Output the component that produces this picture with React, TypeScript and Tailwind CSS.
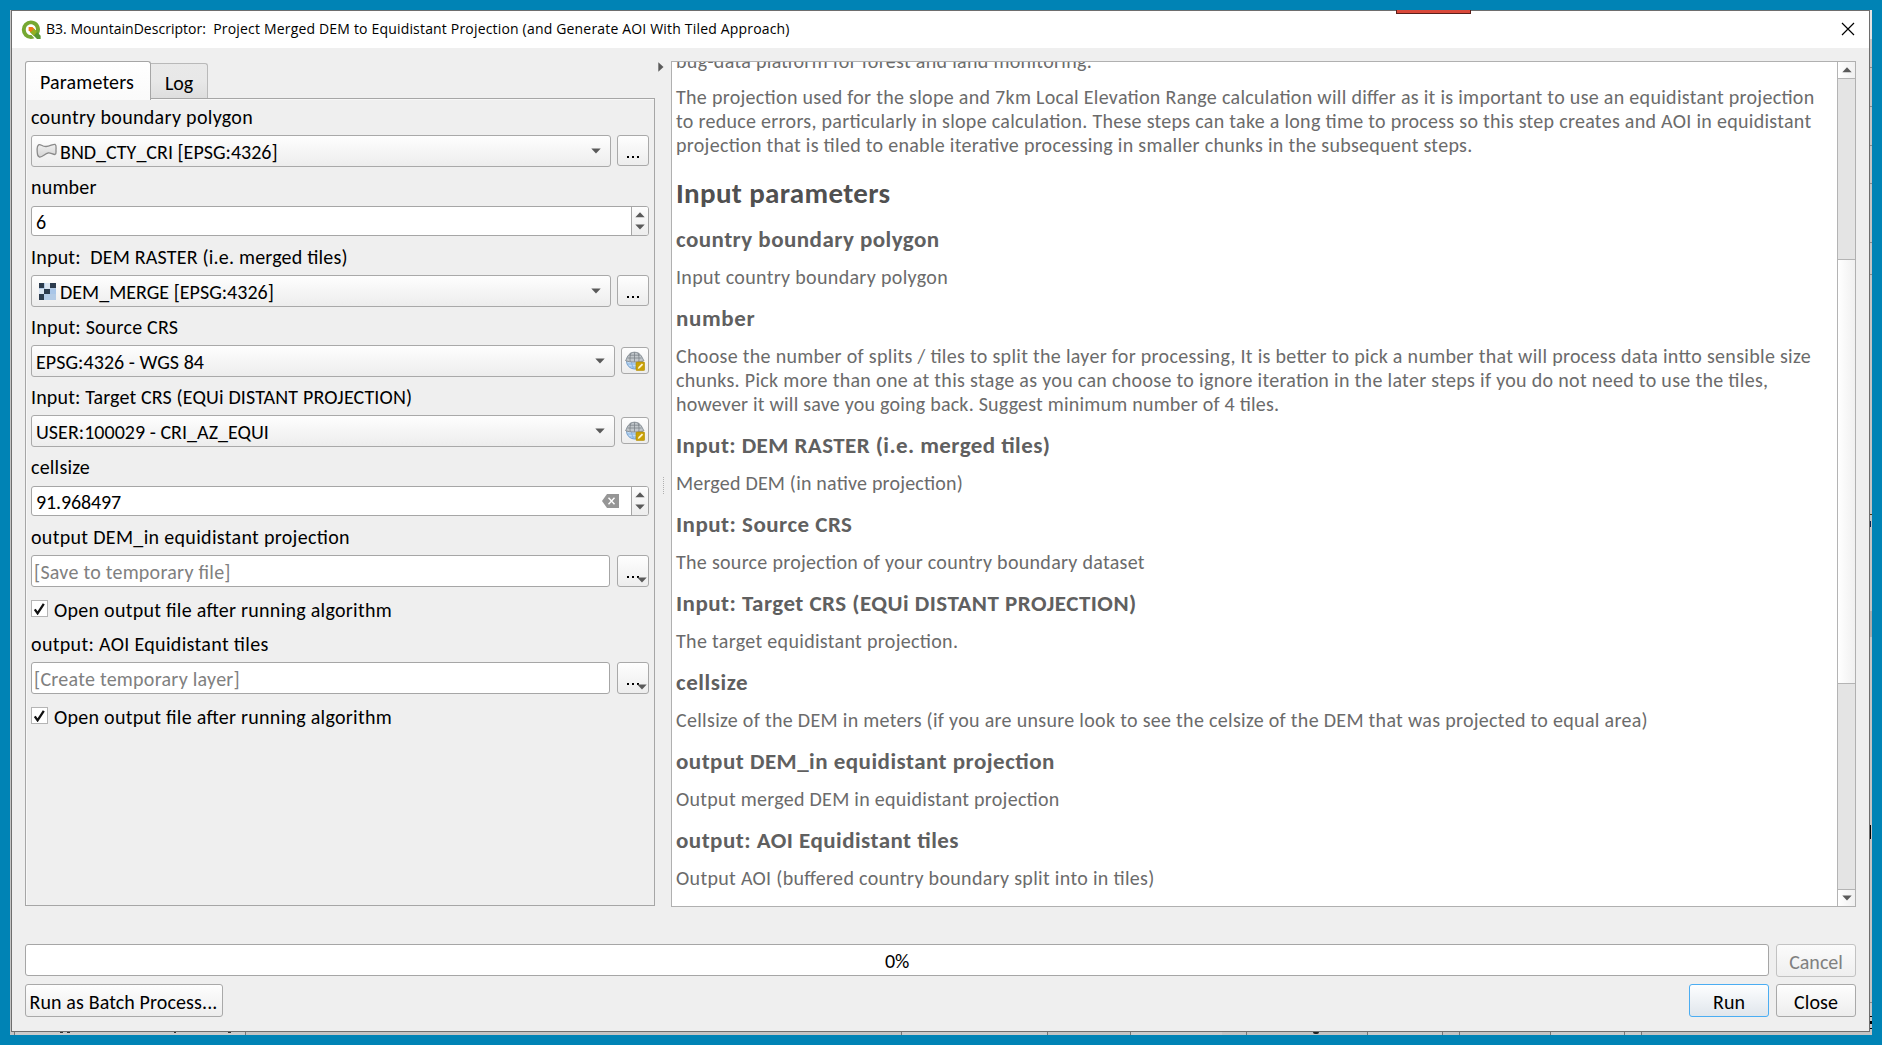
import type { ReactNode } from "react";

function Arrow({ up = false, className = "" }: { up?: boolean; className?: string }) {
  return (
    <svg width="10" height="6" viewBox="0 0 10 6" className={`block shrink-0 ${className}`}>
      <path d={up ? "M0.3 5.3 L5 0.3 L9.7 5.3Z" : "M0.3 0.5 L9.7 0.5 L5 5.5Z"} fill="#5a5a5a" />
    </svg>
  );
}

function QgisLogo() {
  return (
    <svg width="20" height="20" viewBox="0 0 20 20" className="block">
      <path
        fillRule="evenodd"
        d="M9.8 0.5a9 9.2 0 1 0 0 18.4c1.3 0 2.5-.2 3.6-.7l-3-3.1c-3.3.2-5.6-2.3-5.6-5.4 0-3.2 2.2-5.5 5.1-5.5s5.100 2.300 5.100 5.400c0 .8-.1 1.400-.4 2l2.900 3a9.200 9.200 0 0 0 1.500-5C19 4.300 15.200.500 9.800.500Z"
        fill="#76a832"
      />
      <path d="M9.500 8.800h3.600l6.500 7v3.200h-3.600l-6.500-6.600Z" fill="#589632" />
      <path d="M9.500 8.800h3.600l3 3.300-3.300 3.600-3.300-3.300Z" fill="#93b023" />
      <path d="M7.600 7h3.900l1.600 1.800-3.600 3.500-1.900-2Z" fill="#ee7913" />
    </svg>
  );
}

function PolygonIcon() {
  return (
    <svg width="22" height="16" viewBox="0 0 22 16" className="block shrink-0">
      <defs>
        <linearGradient id="poly" x1="0" y1="0" x2="0" y2="1">
          <stop offset="0" stopColor="#f0f0f0" />
          <stop offset="1" stopColor="#d4d4d4" />
        </linearGradient>
      </defs>
      <path
        d="M3 1.600C5 1 6 3.600 10 3.500C14 3.400 16.500 1 19 1.300C20.800 2.500 20 5 20 7C20 9.500 20.500 11 19 11.500C16.500 11.500 14.500 9.500 12 10C9 10.500 6.500 14.500 3.500 14C1 13.500 1.500 11 1.200 8.500C1 6 1 2.600 3 1.600Z"
        fill="url(#poly)"
        stroke="#8a8a8a"
        strokeWidth="1.300"
      />
    </svg>
  );
}

function RasterIcon() {
  return (
    <svg width="17" height="17" viewBox="0 0 17 17" className="block shrink-0" shapeRendering="crispEdges">
      <rect width="17" height="17" fill="#b3cbe6" />
      <rect x="6" width="5" height="6" fill="#dbe6f2" />
      <rect y="6" width="6" height="5" fill="#dbe6f2" />
      <rect width="5" height="5" fill="#2b3b4d" />
      <rect x="11" width="6" height="5" fill="#2b3b4d" />
      <rect x="5" y="6" width="6" height="5" fill="#2b3b4d" />
      <rect y="11" width="5" height="6" fill="#2b3b4d" />
      <rect x="11" y="6" width="6" height="5" fill="#a9c6e8" />
    </svg>
  );
}

function GlobeIcon() {
  return (
    <svg width="20" height="20" viewBox="0 0 20 20" className="block">
      <circle cx="9.500" cy="10" r="8" fill="#c3dcf5" stroke="#6f9ccb" strokeWidth="1" />
      <path d="M3 13h12M5 16h8M6.500 10c0 4 1.500 7 3 8M12.500 10c0 4-1.500 7-3 8" fill="none" stroke="#7fadde" strokeWidth="0.900" />
      <path d="M0.500 9.500C2 8.500 2.500 1.200 9.500 1.200S17.500 8.500 19 9.500C16 11.500 3.500 11.500 0.500 9.500Z" fill="#c2c7cb" stroke="#8a9197" strokeWidth="1" />
      <path d="M2.600 7h14M4.200 4.200h10.800M9.500 1.200v9.600M6 1.800C5 4.500 4.800 7.500 5.200 10.500M13 1.800c1 2.700 1.200 5.700.8 8.700" fill="none" stroke="#7c8389" strokeWidth="0.800" />
      <rect x="11" y="11" width="8.600" height="8.600" rx="1" fill="#c9a107" stroke="#b08c00" strokeWidth="0.600" />
      <path d="M12.800 17.900l.6-2 3.500-3.400 1.300 1.300-3.500 3.500Z" fill="#fff6cf" />
    </svg>
  );
}

const edge = "border border-[#a6a6a6] rounded-[3px]";
const raised = "border border-[#a9a9a9] rounded-[3px] bg-linear-to-b from-[#fefefe] to-[#ededed]";

function Group({ label, tracking, children }: { label: string; tracking: string; children: ReactNode }) {
  return (
    <div className="h-[70px] shrink-0">
      <div className={`flex h-[35px] items-center pb-px whitespace-pre ${tracking}`}>{label}</div>
      {children}
    </div>
  );
}

function Combo({ text, tracking, icon, width }: { text: string; tracking: string; icon?: ReactNode; width: string }) {
  return (
    <div className={`flex h-8 items-center ${width} ${raised}`}>
      {icon}
      <span className={`grow pt-px whitespace-pre ${icon ? "pl-[2px]" : "pl-1"} ${tracking}`}>{text}</span>
      <Arrow className="mr-[9px]" />
    </div>
  );
}

function Dots({ menu = false }: { menu?: boolean }) {
  return (
    <button className={`relative flex w-8 items-end justify-center ${menu ? "h-8 pb-[8px]" : "h-[31px] pb-[7px]"} ${raised}`}>
      <span className="flex gap-[3px]">
        <i className="h-0.5 w-0.5 bg-black" />
        <i className="h-0.5 w-0.5 bg-black" />
        <i className="h-0.5 w-0.5 bg-black" />
      </span>
      {menu && <Arrow className="absolute right-px bottom-[3px]" />}
    </button>
  );
}

function Spin({ value, tracking, clear = false }: { value: string; tracking: string; clear?: boolean }) {
  return (
    <div className={`mt-px flex h-[30px] items-center bg-white ${edge}`}>
      <span className={`grow pt-px pl-1 ${tracking}`}>{value}</span>
      {clear && (
        <svg width="17" height="14" viewBox="0 0 17 14" className="mr-3 block">
          <path d="M5 0H17V14H5L0 7Z" fill="#969696" />
          <path d="M6.500 3.800l6 6.400M12.500 3.800l-6 6.400" stroke="#fff" strokeWidth="1.400" />
        </svg>
      )}
      <div className="flex h-full w-[17px] flex-col items-center justify-center gap-1.5 rounded-r-[2px] border-l border-[#a6a6a6] bg-linear-to-b from-[#fdfdfd] to-[#ededed]">
        <Arrow up />
        <Arrow />
      </div>
    </div>
  );
}

function Crs({ text, tracking }: { text: string; tracking: string }) {
  return (
    <div className="flex items-start gap-1.5">
      <Combo width="w-[584px]" text={text} tracking={tracking} />
      <button className={`mt-0.5 flex h-[27px] w-7 items-center justify-center ${raised}`}>
        <GlobeIcon />
      </button>
    </div>
  );
}

function Output({ label, placeholder, tracking, phTracking }: { label: string; placeholder: string; tracking: string; phTracking: string }) {
  return (
    <div className="h-[107px] shrink-0">
      <div className={`flex h-[35px] items-center pb-px ${tracking}`}>{label}</div>
      <div className="flex gap-[7px]">
        <div className={`flex h-8 w-[579px] items-center bg-white pt-px pl-[2px] text-[#808080] ${edge} ${phTracking}`}>{placeholder}</div>
        <Dots menu />
      </div>
      <div className="mt-[13px] flex h-[17px] items-center">
        <span className="flex h-[17px] w-[17px] items-center justify-center border border-[#b4b4b4] bg-white">
          <svg width="13" height="13" viewBox="0 0 13 13" className="block">
            <path d="M1.800 7.300L4.600 11.300L10.800 1.800" fill="none" stroke="#111" strokeWidth="2.300" />
          </svg>
        </span>
        <span className="pt-0.5 pl-1.5 tracking-[0.271px]">Open output file after running algorithm</span>
      </div>
    </div>
  );
}

function P({ lines }: { lines: [string, string][] }) {
  return (
    <p className="mb-2 text-[#6b6b6b]">
      {lines.map(([text, tracking]) => (
        <span key={text} className={`block h-6 leading-6 whitespace-pre ${tracking}`}>
          {text}
        </span>
      ))}
    </p>
  );
}

const help: { title: string; titleTracking: string; lines: [string, string][] }[] = [
  { title: "country boundary polygon", titleTracking: "tracking-[0.46px]", lines: [["Input country boundary polygon", "tracking-[0.32px]"]] },
  {
    title: "number",
    titleTracking: "tracking-[0.65px]",
    lines: [
      ["Choose the number of splits / tiles to split the layer for processing, It is better to pick a number that will process data intto sensible size", "tracking-[0.308px]"],
      ["chunks. Pick more than one at this stage as you can choose to ignore iteration in the later steps if you do not need to use the tiles,", "tracking-[0.314px]"],
      ["however it will save you going back. Suggest minimum number of 4 tiles.", "tracking-[0.222px]"],
    ],
  },
  { title: "Input: DEM RASTER (i.e. merged tiles)", titleTracking: "tracking-[0.43px]", lines: [["Merged DEM (in native projection)", "tracking-[0.2px]"]] },
  { title: "Input: Source CRS", titleTracking: "tracking-[0.48px]", lines: [["The source projection of your country boundary dataset", "tracking-[0.29px]"]] },
  { title: "Input: Target CRS (EQUi DISTANT PROJECTION)", titleTracking: "tracking-[0.47px]", lines: [["The target equidistant projection.", "tracking-[0.32px]"]] },
  {
    title: "cellsize",
    titleTracking: "tracking-[0.55px]",
    lines: [["Cellsize of the DEM in meters (if you are unsure look to see the celsize of the DEM that was projected to equal area)", "tracking-[0.303px]"]],
  },
  { title: "output DEM_in equidistant projection", titleTracking: "tracking-[0.48px]", lines: [["Output merged DEM in equidistant projection", "tracking-[0.283px]"]] },
  { title: "output: AOI Equidistant tiles", titleTracking: "tracking-[0.47px]", lines: [["Output AOI (buffered country boundary split into in tiles)", "tracking-[0.316px]"]] },
];

function ScrollBar() {
  return (
    <div className="flex w-[18px] shrink-0 flex-col border-l border-[#b4b4b4] bg-[#e4e4e4]">
      <div className="flex h-[16px] shrink-0 items-center justify-center bg-linear-to-r from-white to-[#f0f0f0]">
        <Arrow up />
      </div>
      <div className="h-[181px] shrink-0 border-t border-[#b4b4b4]" />
      <div className="h-[425px] shrink-0 border-y border-[#b4b4b4] bg-linear-to-r from-white to-[#f0f0f0]" />
      <div className="grow" />
      <div className="flex h-[17px] shrink-0 items-center justify-center border-t border-[#b4b4b4] bg-linear-to-r from-white to-[#f0f0f0]">
        <Arrow />
      </div>
    </div>
  );
}

export default function App() {
  return (
    <div className="h-[1045px] w-[1882px] overflow-hidden bg-[#0083b5] p-[10px] font-[Carlito,Lato,'Open_Sans',sans-serif] text-[20px] leading-6 text-black [font-feature-settings:'liga'_1,'clig'_1]">
      <div className="relative h-[1025px] w-[1862px] bg-[#c4c4c4] pl-px">
        {/* Slivers of the window behind the dialog */}
        <div className="absolute top-0 right-0 h-[29px] w-0.5 bg-[#e4e4e4]" />
        <div className="absolute top-[57px] right-0 h-px w-0.5 bg-[#888]" />
        <div className="absolute top-[96px] right-0 h-px w-0.5 bg-[#888]" />
        <div className="absolute top-[135px] right-0 h-px w-0.5 bg-[#888]" />
        <div className="absolute top-[173px] right-0 h-px w-0.5 bg-[#888]" />
        <div className="absolute top-[232px] right-0 h-px w-0.5 bg-[#888]" />
        <div className="absolute top-[264px] right-0 h-px w-0.5 bg-[#888]" />
        <div className="absolute top-[504px] right-0 h-px w-0.5 bg-[#4a3510]" />
        <div className="absolute top-[511px] right-px h-[6px] w-px bg-[#0d2450]" />
        <div className="absolute top-[601px] right-0 h-[26px] w-0.5 bg-[#aaa]" />
        <div className="absolute top-[815px] right-px h-[14px] w-px bg-black" />
        <div className="absolute top-[992px] right-0 h-px w-0.5 bg-[#888]" />
        <div className="absolute top-[1006px] right-0 h-px w-[3px] bg-black" />
        <div className="absolute top-[1011px] right-0 h-[3px] w-[3px] bg-black" />
        <div className="absolute top-[1018px] right-0 h-px w-[3px] bg-black" />
        <div className="absolute top-[1022px] left-[4px] h-[3px] w-[232px] border-x border-[#777] bg-[#ccc]" />
        <div className="absolute top-[1022px] left-[50px] h-px w-[3px] bg-[#333]" />
        <div className="absolute top-[1022px] left-[57px] h-px w-[3px] bg-[#333]" />
        <div className="absolute top-[1022px] left-[164px] h-px w-[2px] bg-[#333]" />
        <div className="absolute top-[1022px] left-[218px] h-px w-[3px] bg-[#333]" />
        <div className="absolute top-[1022px] left-[891px] h-[3px] w-[147px] border-x border-[#777] bg-[#ccc]" />
        <div className="absolute top-[1022px] left-[1120px] h-[3px] w-[92px] border-l border-[#777] bg-[#ccc]" />
        <div className="absolute top-[1022px] left-[1236px] h-[3px] w-px bg-[#777]" />
        <div className="absolute top-[1022px] left-[1303px] h-0.5 w-[6px] rounded-b bg-[#222]" />
        <div className="absolute top-[1022px] left-[1357px] h-[3px] w-[76px] border-x border-[#777] bg-[#ccc]" />
        <div className="absolute top-[1022px] left-[1449px] h-[3px] w-px bg-[#777]" />
        <div className="absolute top-[1022px] left-[1540px] h-[3px] w-[75px] border-l border-[#777] bg-[#ccc]" />
        <div className="absolute top-[1022px] left-[1614px] h-[3px] w-[18px] border-x border-[#777] bg-[#ccc]" />

        <div className="relative flex h-[1022px] w-[1859px] flex-col border border-[#6e6e6e] bg-[#efefef]">
          <div className="absolute -top-px left-[1384px] h-1 w-[75px] border border-t-0 border-[#5c1f1a] bg-[#d9493a]" />
          <header className="flex h-[37px] shrink-0 items-center bg-white pl-[9px]">
            <QgisLogo />
            <h1 className="pb-px pl-[5px] font-['Open_Sans',sans-serif] text-[14px] whitespace-pre">
              <span className="tracking-[0.02px]">{"B3. MountainDescriptor:  "}</span>
              <span className="tracking-[0.177px]">Project Merged DEM to Equidistant Projection (and Generate AOI With Tiled Approach)</span>
            </h1>
            <svg width="14" height="14" viewBox="0 0 14 14" className="mr-[14px] mb-px ml-auto block">
              <path d="M1 1L13 13M13 1L1 13" stroke="#000" strokeWidth="1.200" />
            </svg>
          </header>

          <div className="flex h-[859px] shrink-0 items-start pt-[13px] pl-[13px]">
            <div className="flex w-[630px] shrink-0 flex-col">
              <div className="relative z-10 flex h-[37px] items-end">
                <div className="-mb-px flex h-[39px] w-[126px] items-center justify-center self-start rounded-t-[3px] border border-b-0 border-[#a6a6a6] bg-linear-to-b from-white to-[#fafafa] pt-px pr-0.5 tracking-[0.166px]">
                  Parameters
                </div>
                <div className="flex h-[35px] w-[57px] items-center justify-center rounded-tr-[3px] border border-b-0 border-l-0 border-[#b9b9b9] bg-linear-to-b from-[#e9e9e9] via-[#e8e8e8] to-[#dedede] pt-1 tracking-[-0.2px]">
                  Log
                </div>
              </div>
              <div className="flex h-[808px] flex-col border border-[#a6a6a6] pt-px pr-[5px] pl-[5px] shadow-[inset_1px_1px_0_#f8f8f8]">
                <Group label="country boundary polygon" tracking="tracking-[0.31px]">
                  <div className="flex gap-1.5">
                    <Combo
                      width="w-[580px]"
                      text="BND_CTY_CRI [EPSG:4326]"
                      tracking="tracking-[0.01px]"
                      icon={<span className="pl-1"><PolygonIcon /></span>}
                    />
                    <Dots />
                  </div>
                </Group>
                <Group label="number" tracking="tracking-[0.2px]">
                  <Spin value="6" tracking="tracking-normal" />
                </Group>
                <Group label="Input:  DEM RASTER (i.e. merged tiles)" tracking="tracking-[0.2px]">
                  <div className="flex gap-1.5">
                    <Combo
                      width="w-[580px]"
                      text="DEM_MERGE [EPSG:4326]"
                      tracking="tracking-[0.01px]"
                      icon={<span className="pr-[2px] pl-[7px]"><RasterIcon /></span>}
                    />
                    <Dots />
                  </div>
                </Group>
                <Group label="Input: Source CRS" tracking="tracking-[0.22px]">
                  <Crs text="EPSG:4326 - WGS 84" tracking="tracking-[0.05px]" />
                </Group>
                <Group label="Input: Target CRS (EQUi DISTANT PROJECTION)" tracking="tracking-[0.15px]">
                  <Crs text="USER:100029 - CRI_AZ_EQUI" tracking="tracking-[0.03px]" />
                </Group>
                <Group label="cellsize" tracking="tracking-[0.2px]">
                  <Spin value="91.968497" tracking="tracking-[-0.12px]" clear />
                </Group>
                <Output
                  label="output DEM_in equidistant projection"
                  tracking="tracking-[0.32px]"
                  placeholder="[Save to temporary file]"
                  phTracking="tracking-[0.25px]"
                />
                <Output
                  label="output: AOI Equidistant tiles"
                  tracking="tracking-[0.33px]"
                  placeholder="[Create temporary layer]"
                  phTracking="tracking-[0.26px]"
                />
              </div>
            </div>

            <div className="flex w-4 shrink-0 flex-col items-start">
              <svg width="6" height="10" viewBox="0 0 6 10" className="mt-[1px] ml-[3px] block">
                <path d="M0.300 0.300V9.700L5.500 5Z" fill="#5a5a5a" />
              </svg>
              <div className="mt-[405px] ml-2 h-[17px] border-l border-dotted border-[#b0b0b0]" />
            </div>

            <div className="flex h-[846px] w-[1185px] border border-[#b0b0b0] bg-white">
              <article className="h-full grow overflow-hidden pl-1">
                <div className="-mt-[13px]">
                  <P lines={[["bug-data platform for forest and land monitoring.", "tracking-[0.32px]"]]} />
                </div>
                <div className="pt-1">
                  <P
                    lines={[
                      ["The projection used for the slope and 7km Local Elevation Range calculation will differ as it is important to use an equidistant projection", "tracking-[0.297px]"],
                      ["to reduce errors, particularly in slope calculation. These steps can take a long time to process so this step creates and AOI in equidistant", "tracking-[0.293px]"],
                      ["projection that is tiled to enable iterative processing in smaller chunks in the subsequent steps.", "tracking-[0.29px]"],
                    ]}
                  />
                </div>
                <h2 className="mt-[20px] mb-[9px] h-8 text-[29px] leading-8 font-bold tracking-[0.36px] text-[#505050]">Input parameters</h2>
                {help.map(({ title, titleTracking, lines }) => (
                  <section key={title}>
                    <h3 className={`mb-[10px] h-9 pt-[7px] text-[23px] leading-7 font-bold text-[#606060] ${titleTracking}`}>{title}</h3>
                    <div className="pt-px">
                      <P lines={lines} />
                    </div>
                  </section>
                ))}
              </article>
              <ScrollBar />
            </div>
          </div>

          <footer className="flex flex-col gap-[7px] pt-[37px] pl-[13px]">
            <div className="flex gap-[7px]">
              <div className={`flex h-8 w-[1744px] items-center justify-center bg-white pt-px tracking-[-0.2px] ${edge}`}>0%</div>
              <button className="h-[33px] w-20 rounded-[3px] border border-[#c2c2c2] bg-linear-to-b from-[#fbfbfb] to-[#efefef] pt-0.5 text-[#808080]">Cancel</button>
            </div>
            <div className="flex">
              <button className={`h-[33px] w-[198px] pt-0.5 pr-px tracking-[0.12px] ${raised}`}>Run as Batch Process...</button>
              <button className="ml-auto h-[33px] w-20 rounded-[3px] border border-[#4badf2] bg-linear-to-b from-[#fdfeff] to-[#e0e6ec] pt-0.5">Run</button>
              <button className={`mr-[13px] ml-[7px] h-[33px] w-20 pt-0.5 tracking-[0.1px] ${raised}`}>Close</button>
            </div>
          </footer>
        </div>
      </div>
    </div>
  );
}
